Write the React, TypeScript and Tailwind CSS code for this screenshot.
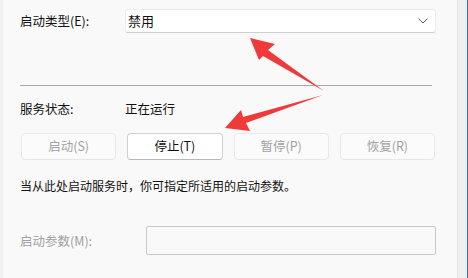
import React from "react";

const font = { fontFamily: '"Noto Sans CJK SC", "Noto Sans", sans-serif' };

function Btn({ label, active }: { label: string; active?: boolean }) {
  return (
    <div
      className={
        "h-[27px] flex items-center justify-center rounded-[4px] text-[12.5px] border " +
        (active
          ? "bg-white border-[#d0d0d0] border-b-[#b8b8b8] text-[#111111]"
          : "bg-[#fbfbfb] border-[#e8e8e8] text-[#a2a2a2]")
      }
    >
      {label}
    </div>
  );
}

export default function App() {
  return (
    <div className="relative w-[468px] h-[278px] flex bg-[#f9f9f9] overflow-hidden" style={font}>
      <div className="w-[3px] bg-[#efefef]" />
      <div className="flex-1 flex flex-col pl-[17px] pt-[9px] text-[12px] text-[#111111]">
        <div className="flex items-center h-[24px]">
          <div className="w-[105px] leading-[20px] text-[12.5px]">启动类型(E):</div>
          <div className="w-[311px] h-[24px] bg-white border border-[#ececec] border-b-[#cfcfcf] rounded-[3px] flex items-center pl-[2px] pr-[7px]">
            <span className="flex-1 leading-[20px] text-[13px]">禁用</span>
            <svg width="10" height="6" viewBox="0 0 10 6" fill="none">
              <path d="M0.5 0.5 L5 5 L9.5 0.5" stroke="#5a5a5a" strokeWidth="1" />
            </svg>
          </div>
        </div>
        <div className="mt-[52px] h-px w-[412px] bg-[#a8a8a8]" />
        <div className="mt-[13px] flex items-center h-[20px] text-[12.5px]">
          <div className="w-[105px] leading-[20px]">服务状态:</div>
          <div className="leading-[20px]">正在运行</div>
        </div>
        <div className="mt-[14px] ml-px w-[414px] grid grid-cols-4 gap-[11px]">
          <Btn label="启动(S)" />
          <Btn label="停止(T)" active />
          <Btn label="暂停(P)" />
          <Btn label="恢复(R)" />
        </div>
        <div className="mt-[16px] leading-[20px]">当从此处启动服务时，你可指定所适用的启动参数。</div>
        <div className="mt-[30px] flex items-center h-[29px] text-[12.5px]">
          <div className="w-[126px] leading-[20px] text-[#a0a0a0]">启动参数(M):</div>
          <div className="w-[290px] h-[29px] border border-[#c9c9c9] bg-[#f9f9f9] rounded-[2px]" />
        </div>
      </div>
      <div className="w-px bg-[#e3e3e3]" />
      <div className="w-[9px] bg-[#efefef]" />
      <div className="w-px bg-[#2f6fb8]" />
      <svg className="absolute left-0 top-0 pointer-events-none" width="468" height="278" viewBox="0 0 468 278">
        <polygon points="250,38 275,44 268,50 324,91 263,56 259,60" fill="#f03a3a" />
        <polygon points="225,128 241,110 243,117 323,95 246,123 250,131" fill="#f03a3a" />
      </svg>
    </div>
  );
}
